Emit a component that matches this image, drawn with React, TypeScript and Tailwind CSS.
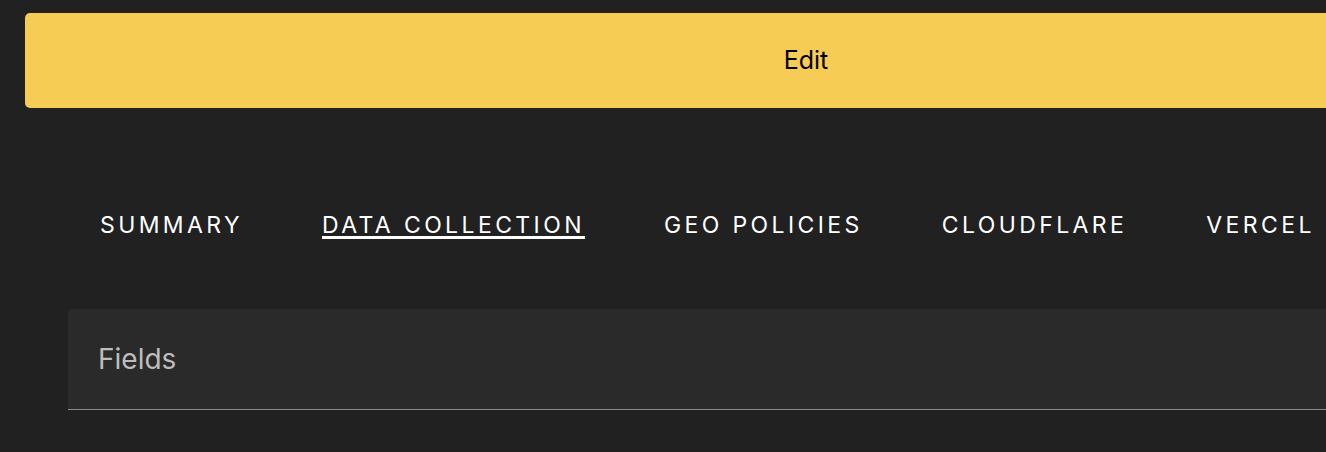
import React from "react";

const tabs = ["Summary", "Data Collection", "Geo Policies", "Cloudflare", "Vercel"];

export default function App() {
  const active = "Data Collection";
  return (
    <div
      className="h-[452px] w-[1326px] overflow-hidden bg-[#212121]"
      style={{ fontFamily: "Inter, 'Liberation Sans', sans-serif" }}
    >
      <div className="w-[1587px] pl-[25px] pt-[13px]">
        {/* Edit button */}
        <button className="flex h-[95px] w-full items-center justify-center rounded-[5px] bg-[#f7cc54] text-[25px] text-black">
          Edit
        </button>

        {/* Tabs */}
        <nav className="mt-[101px] flex items-center gap-[79px] pl-[75px]">
          {tabs.map((t) => (
            <span
              key={t}
              className={`text-[23px] uppercase leading-[32px] tracking-[3.4px] text-white ${
                t === active ? "underline decoration-[3px] underline-offset-[3px]" : ""
              }`}
            >
              {t}
            </span>
          ))}
        </nav>

        {/* Fields panel */}
        <div className="ml-[43px] mt-[68px] flex h-[101px] items-center rounded-tl-[4px] border-b border-[#8c8c8c] bg-[#2a2a2a] pl-[30px]">
          <span className="text-[28px] text-[#bdbdbd]">Fields</span>
        </div>
      </div>
    </div>
  );
}
